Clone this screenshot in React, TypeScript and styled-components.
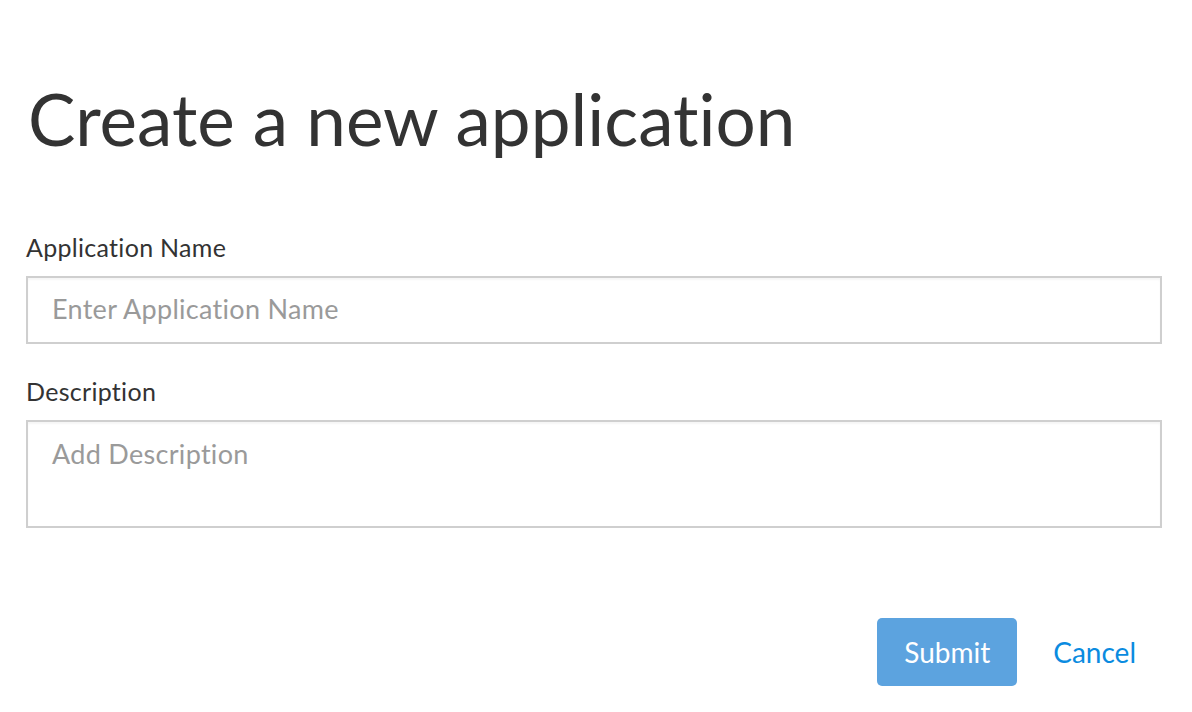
import React from "react";
import styled, { createGlobalStyle } from "styled-components";

const Global = createGlobalStyle`
  html, body { margin: 0; padding: 0; background: #fff; }
  body {
    font-family: Lato, "Open Sans", sans-serif;
    color: #333;
    font-variant-ligatures: none;
    font-feature-settings: "liga" 0;
  }
  input, textarea, button { font-variant-ligatures: none; font-feature-settings: "liga" 0; }
  * { box-sizing: border-box; }
`;

const Page = styled.div`
  padding: 76px 30px 0 26px;
  display: flex;
  flex-direction: column;
`;

const Title = styled.h1`
  margin: 0 0 0 2px;
  font-size: 71px;
  font-weight: 400;
  line-height: 1.2;
  color: #333;
`;

const Form = styled.form`
  margin-top: 71px;
  display: flex;
  flex-direction: column;
`;

const Label = styled.label`
  font-size: 25px;
  line-height: 30px;
  letter-spacing: 0.3px;
  color: #333;
  margin-bottom: 14px;
`;

const fieldBase = `
  width: 100%;
  border: 2px solid #cfcfcf;
  box-shadow: inset 0 2px 2px rgba(0, 0, 0, 0.04);
  font-family: inherit;
  font-size: 27px;
  letter-spacing: 0.3px;
  color: #333;
  outline: none;
  background: #fff;
`;

const Field = styled.input`
  ${fieldBase}
  height: 68px;
  padding: 0 24px 4px;
  margin-bottom: 32px;
  &::placeholder { color: #9a9a9a; }
`;

const Area = styled.textarea`
  ${fieldBase}
  height: 108px;
  padding: 17px 24px 0;
  line-height: 30px;
  resize: none;
  &::placeholder { color: #9a9a9a; }
`;

const Actions = styled.div`
  margin-top: 90px;
  display: flex;
  justify-content: flex-end;
  align-items: center;
  gap: 36px;
  padding-right: 26px;
`;

const SubmitButton = styled.button`
  width: 140px;
  height: 68px;
  border: none;
  border-radius: 5px;
  background: #5ca3df;
  color: #fff;
  font-family: inherit;
  font-size: 28px;
  padding: 0;
`;

const CancelLink = styled.a`
  color: #0a8be0;
  font-size: 28px;
  text-decoration: none;
`;

export default function App() {
  return (
    <>
      <Global />
      <Page>
        <Title>Create a new application</Title>
        <Form onSubmit={(e) => e.preventDefault()}>
          <Label htmlFor="app-name">Application Name</Label>
          <Field id="app-name" placeholder="Enter Application Name" />
          <Label htmlFor="app-desc">Description</Label>
          <Area id="app-desc" placeholder="Add Description" />
          <Actions>
            <SubmitButton type="submit">Submit</SubmitButton>
            <CancelLink href="#">Cancel</CancelLink>
          </Actions>
        </Form>
      </Page>
    </>
  );
}
